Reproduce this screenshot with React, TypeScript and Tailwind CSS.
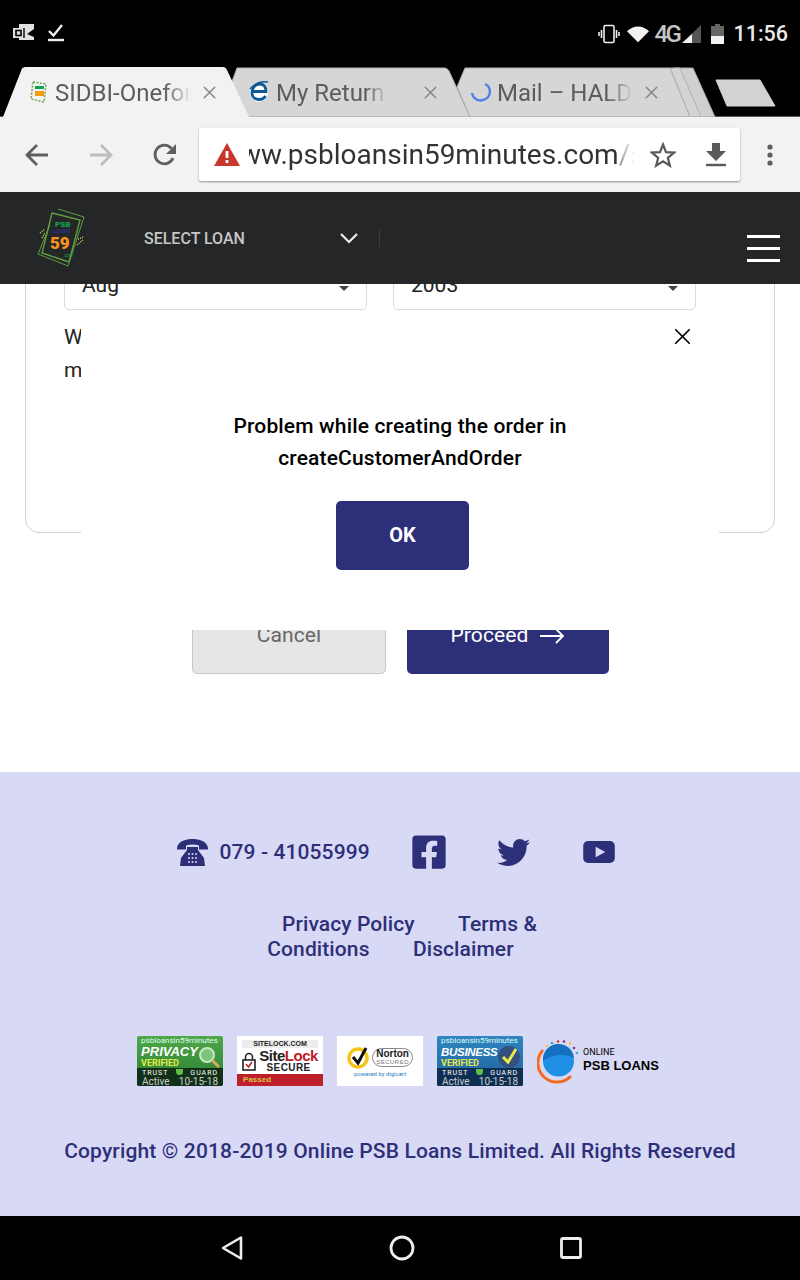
import { FaFacebookSquare, FaTwitter } from "react-icons/fa";
import { X } from "lucide-react";

const NAVY = "#2e2f79";

function StatusBar() {
  return (
    <div className="flex h-[67px] items-center bg-black pl-[13px] pr-[12px] text-[#e8e8e8]">
      <svg width="22" height="20" viewBox="0 0 22 20" className="mb-[2px]">
        <path d="M6 1h15v5l-7 5 7 3v3H6z" fill="#e0e0e0" />
        <path d="M0 5h11v10H0z" fill="#e0e0e0" />
        <path d="M11 5v10" stroke="#000" strokeWidth="1.4" />
        <rect x="3" y="7.5" width="5" height="5" fill="none" stroke="#000" strokeWidth="1.6" />
      </svg>
      <svg width="18" height="20" viewBox="0 0 18 20" className="ml-[12px] mb-[2px]">
        <path d="M2 8l4.500 4.500L15 2" fill="none" stroke="#eee" strokeWidth="2.400" />
        <path d="M1 17h16" stroke="#eee" strokeWidth="2.400" />
      </svg>
      <div className="ml-auto flex items-center">
        <svg width="22" height="20" viewBox="0 0 22 20">
          <rect x="6" y="1.500" width="10" height="17" rx="1.500" fill="none" stroke="#eee" strokeWidth="1.600" />
          <path d="M3.500 6v8M1 8v4M18.500 6v8M21 8v4" stroke="#eee" strokeWidth="1.600" />
        </svg>
        <svg width="22" height="18" viewBox="0 0 24 18" className="ml-[7px]">
          <path d="M0 6C7-1 17-1 24 6L12 18z" fill="#f2f2f2" />
        </svg>
        <span className="ml-[5px] w-[24px] text-[24px] font-medium leading-none tracking-[-2.500px] text-[#c4c4c4]">4G</span>
        <svg width="19" height="18" viewBox="0 0 19 18" className="ml-[4px]">
          <path d="M19 0v18H0z" fill="#555" />
          <path d="M10 9v9H0z" fill="#f2f2f2" />
        </svg>
        <svg width="13" height="20" viewBox="0 0 13 20" className="ml-[10px]">
          <path d="M4 0h5v2h4v18H0V2h4z" fill="#666" />
          <path d="M0 12h13v8H0z" fill="#f2f2f2" />
        </svg>
        <span className="ml-[9px] text-[21.5px] font-medium leading-none text-[#eaeaea]">11:56</span>
      </div>
    </div>
  );
}

function TabShapes() {
  return (
    <svg width="800" height="50" viewBox="0 0 800 50" className="absolute inset-0">
      <path d="M696 50L674 1h19l22 49z" fill="#d0d0d0" stroke="#a8a8a8" />
      <path d="M690 50L670 1h10l21 49z" fill="#d4d4d4" stroke="#b0b0b0" />
      <path d="M457 20l8-19h205l20 49H470z" fill="#d6d6d6" stroke="#b0b0b0" />
      <path d="M230 20l7-19h208a6 6 0 0 1 4 3l21 46H240z" fill="#d6d6d6" stroke="#b0b0b0" />
      <path d="M0 50h800" stroke="#b0b0b0" />
      <path d="M3 50L21 4a5 5 0 0 1 5-4h196a5 5 0 0 1 5 3l22 47z" fill="#f2f2f2" />
      <path d="M716 13h44l15 26h-48z" fill="#d2d2d2" stroke="#d2d2d2" strokeLinejoin="round" />
    </svg>
  );
}

function Tab({ width, icon, label, labelWidth }: { width: string; icon: React.ReactNode; label: string; labelWidth: string }) {
  return (
    <div className={`flex shrink-0 items-center ${width}`}>
      {icon}
      <span className={`ml-[5px] mt-[2px] overflow-hidden whitespace-nowrap text-[24px] text-[#5c5c5c] [mask-image:linear-gradient(to_right,black_80%,transparent)] ${labelWidth}`}>
        {label}
      </span>
    </div>
  );
}

function TabStrip() {
  return (
    <div className="relative h-[50px] bg-black">
      <TabShapes />
      <div className="relative flex h-full items-center pl-[29px]">
        <Tab
          width="w-[220px]"
          labelWidth="w-[136px]"
          label="SIDBI-Onefor"
          icon={
            <svg width="21" height="26" viewBox="0 0 21 26">
              <path d="M4 3l13 2-2 18-13-3z" fill="none" stroke="#6aa84f" strokeWidth="1.500" strokeDasharray="2 1.500" />
              <rect x="6" y="7" width="9" height="3" fill="#12a150" />
              <rect x="6" y="12" width="9" height="5" fill="#f59e0b" />
            </svg>
          }
        />
        <Tab
          width="w-[222px]"
          labelWidth="w-[112px]"
          label="My Return"
          icon={
            <svg width="22" height="24" viewBox="0 0 22 24">
              <ellipse cx="10" cy="12" rx="9" ry="10" fill="#fff" />
              <path d="M3 11.500h14C17 6 14 4 11 4 6 4 3 8 3 13c0 4 3 6.500 7 6.500 3 0 5-1 6.500-3.500" fill="none" stroke="#0b5a96" strokeWidth="2.800" />
              <path d="M1 9C6 3 13 1 19 2" fill="none" stroke="#0b5a96" strokeWidth="1.600" />
            </svg>
          }
        />
        <Tab
          width="w-[200px]"
          labelWidth="w-[136px]"
          label="Mail – HALD"
          icon={
            <svg width="20" height="22" viewBox="0 0 20 22" className="mr-[1px]">
              <path d="M14 3a8.500 8.500 0 0 1-2 16A8.500 8.500 0 0 1 1 12" fill="none" stroke="#4f83e8" strokeWidth="2.400" />
            </svg>
          }
        />
      </div>
      <X size={21} strokeWidth={1.800} className="absolute left-[199px] top-[15px] text-[#8a8a8a]" />
      <X size={21} strokeWidth={1.800} className="absolute left-[420px] top-[15px] text-[#8a8a8a]" />
      <X size={21} strokeWidth={1.800} className="absolute left-[641px] top-[15px] text-[#8a8a8a]" />
    </div>
  );
}

function Toolbar() {
  return (
    <div className="flex h-[75px] items-center bg-[#f2f2f2] pl-[25px]">
      <svg width="24" height="24" viewBox="0 0 24 24">
        <path d="M23 12H3M12 2L2 12l10 10" fill="none" stroke="#5f5f5f" strokeWidth="2.800" />
      </svg>
      <svg width="24" height="24" viewBox="0 0 24 24" className="ml-[40px]">
        <path d="M1 12h20M12 2l10 10-10 10" fill="none" stroke="#bdbdbd" strokeWidth="2.800" />
      </svg>
      <svg width="24" height="24" viewBox="0 0 24 24" className="ml-[40px]">
        <path d="M20 15a9.300 9.300 0 1 1-1.500-9.500" fill="none" stroke="#5f5f5f" strokeWidth="2.800" />
        <path d="M23 1v10H13z" fill="#5f5f5f" />
      </svg>
      <div className="ml-[22px] flex h-[53px] w-[541px] items-center rounded-[2px] bg-white pl-[15px] shadow-[0_1px_2px_rgba(0,0,0,0.4)]">
        <svg width="26" height="23" viewBox="0 0 26 23" className="shrink-0">
          <path d="M13 0l13 23H0z" fill="#c8372b" />
          <path d="M11.600 8h2.800v7h-2.800zM11.600 17h2.800v3h-2.800z" fill="#fff" />
        </svg>
        <div className="ml-[9px] w-[386px] shrink-0 overflow-hidden [mask-image:linear-gradient(to_right,black_96%,transparent)]">
          <div className="ml-[-30px] mt-[1px] whitespace-nowrap text-[28px] leading-[34px] text-[#333]">
            www.psbloansin59minutes.com<span className="text-[#9a9a9a]">/s</span>
          </div>
        </div>
        <svg width="26" height="26" viewBox="0 0 26 26" className="ml-[15px] shrink-0">
          <path d="M13 2.500l3 7.600 8.100.5-6.300 5.200 2.100 7.900L13 19.300l-6.900 4.400 2.100-7.900-6.300-5.200 8.100-.5z" fill="none" stroke="#5a5a5a" strokeWidth="2.200" />
        </svg>
        <svg width="22" height="24" viewBox="0 0 22 24" className="ml-[29px] shrink-0">
          <path d="M7 0h8v8h6L11 18 1 8h6z" fill="#5a5a5a" />
          <path d="M1 22h20" stroke="#5a5a5a" strokeWidth="2.400" />
        </svg>
      </div>
      <svg width="6" height="22" viewBox="0 0 6 22" className="ml-[27px]">
        <circle cx="3" cy="3" r="2.600" fill="#5f5f5f" />
        <circle cx="3" cy="11" r="2.600" fill="#5f5f5f" />
        <circle cx="3" cy="19" r="2.600" fill="#5f5f5f" />
      </svg>
    </div>
  );
}

function SiteHeader() {
  return (
    <div className="relative z-10 flex h-[92px] items-center bg-[#252628] pl-[37px]">
      <svg width="48" height="62" viewBox="0 0 48 62" className="shrink-0">
        <path d="M21 2l26 8-16 49L1 47 13 18" fill="none" stroke="#5f9e3c" strokeWidth="1" />
        <path d="M15 6l28 7-11 42L5 46z" fill="none" stroke="#5f9e3c" strokeWidth="1.400" />
        <text x="18" y="20" fontSize="8" fontWeight="900" fill="#12a150" fontFamily="Roboto">PSB</text>
        <text x="16" y="26" fontSize="5.500" fontWeight="700" fill="#2b2f80" fontFamily="Roboto">LOANS</text>
        <text x="13" y="42" fontSize="17" fontWeight="900" fill="#f7941d" fontFamily="Roboto">59</text>
        <text x="26" y="50" fontSize="4.500" fill="#12a150" fontFamily="Roboto">.com</text>
        <path d="M3 26l5-4M5 31l3-5M40 38l6-5M41 32l6-2" stroke="#c8d44a" strokeWidth="1.500" strokeDasharray="1 1.200" />
      </svg>
      <span className="ml-[59px] mt-[1px] text-[16px] font-medium text-[#c6c6c6]">SELECT LOAN</span>
      <svg width="20" height="13" viewBox="0 0 20 13" className="ml-[94px]">
        <path d="M2 2l8 8 8-8" fill="none" stroke="#eee" strokeWidth="2.200" />
      </svg>
      <div className="ml-[20px] h-[18px] w-px bg-[#3c3d3f]" />
      <div className="ml-auto mr-[20px] mt-[20px] flex flex-col gap-[9px]">
        <div className="h-[3px] w-[33px] bg-white" />
        <div className="h-[3px] w-[33px] bg-white" />
        <div className="h-[3px] w-[33px] bg-white" />
      </div>
    </div>
  );
}

function SelectBox({ label }: { label: string }) {
  return (
    <div className="relative flex h-[56px] w-[303px] items-center rounded-[5px] border border-[#d5dbe3] pl-[17px] pt-[8px] text-[21px] text-[#222]">
      {label}
      <div className="absolute right-[17px] top-[31px] h-0 w-0 border-x-[5px] border-t-[5px] border-x-transparent border-t-[#444]" />
    </div>
  );
}

function ErrorDialog() {
  return (
    <div className="absolute left-[81px] top-[34px] flex h-[312px] w-[638px] flex-col items-center bg-white pt-[92px]">
      <p className="text-center text-[21px] font-medium leading-[32px] tracking-[0.15px] text-black">
        Problem while creating the order in
        <br />
        createCustomerAndOrder
      </p>
      <button className="ml-[5px] mt-[27px] h-[69px] w-[133px] rounded-[5px] bg-[#2e2f79] pb-[2px] text-[20px] font-bold text-white">OK</button>
    </div>
  );
}

function Content() {
  return (
    <div className="relative h-[488px] overflow-hidden bg-white">
      <div className="mx-[25px] mt-[-31px] h-[280px] rounded-[14px] border border-[#cfd3d8] pl-[38px] pr-[78px]">
        <div className="flex gap-[26px]">
          <SelectBox label="Aug" />
          <SelectBox label="2003" />
        </div>
        <p className="mt-[11px] text-[21px] leading-[33px] text-[#222]">W</p>
        <p className="text-[21px] leading-[33px] text-[#222]">m</p>
      </div>
      <div className="mt-[63px] flex justify-center gap-[21px] pl-[1px]">
        <button className="h-[78px] w-[194px] rounded-[5px] border border-[#c8c8c8] bg-[#e6e6e6] pt-[2px] text-[21px] tracking-[0.1px] text-[#666]">Cancel</button>
        <button className="flex h-[78px] w-[202px] items-center justify-center gap-[12px] rounded-[5px] bg-[#2e2f79] pt-[2px] text-[21px] tracking-[0.1px] text-white">
          Proceed
          <svg width="25" height="16" viewBox="0 0 25 16">
            <path d="M0 8h23M16 1l7 7-7 7" fill="none" stroke="#fff" strokeWidth="1.800" />
          </svg>
        </button>
      </div>
      <ErrorDialog />
      <X size={27} strokeWidth={1.500} className="absolute left-[669px] top-[39px] text-black" />
    </div>
  );
}

function TrustBadge({ from, to, bottom, title, titleClass, glyph }: { from: string; to: string; bottom: string; title: string; titleClass: string; glyph: React.ReactNode }) {
  return (
    <div className="relative flex h-[50px] w-[86px] flex-col overflow-hidden rounded-[2px] text-white" style={{ background: `linear-gradient(to bottom, ${from}, ${to})` }}>
      <div className="h-[32px] pl-[4px] leading-none">
        <div className="mt-[1px] whitespace-nowrap text-[8px] text-[#dfe]">psbloansin59minutes</div>
        <div className={`mt-[1px] font-['Liberation_Sans',sans-serif] font-bold italic leading-[12px] ${titleClass}`}>{title}</div>
        <div className="text-[9px] font-bold leading-[10px] text-[#e6e84a]">VERIFIED</div>
      </div>
      <div className="absolute right-[2px] top-[9px]">{glyph}</div>
      <div className="flex-1 px-[5px] text-[7px] leading-[8px]" style={{ background: bottom }}>
        <div className="mt-[1px] flex justify-between tracking-[1px]">
          <span>TRUST</span>
          <span className="h-[6px] w-[7px] rounded-b-[4px] bg-[#5ec04a]" />
          <span>GUARD</span>
        </div>
        <div className="flex justify-between text-[10px] leading-[10px] text-[#ccc]">
          <span>Active</span>
          <span>10-15-18</span>
        </div>
      </div>
    </div>
  );
}

function SiteLockBadge() {
  return (
    <div className="flex h-[50px] w-[86px] flex-col items-center bg-white">
      <div className="mx-[5px] mt-[4px] w-[76px] bg-[#ececec] text-center font-['Liberation_Sans',sans-serif] text-[7px] font-bold leading-[8px] text-[#222]">SITELOCK.COM</div>
      <div className="flex flex-1 items-center">
        <svg width="14" height="19" viewBox="0 0 14 19">
          <path d="M3.500 8V5a3.500 3.500 0 0 1 7 0v3" fill="none" stroke="#222" strokeWidth="1.600" />
          <rect x="1" y="8" width="12" height="10" fill="none" stroke="#222" strokeWidth="1.600" />
          <path d="M4 12l2.500 3L10 10" fill="none" stroke="#c0202a" strokeWidth="1.600" />
        </svg>
        <div className="ml-[3px] text-center font-['Liberation_Sans',sans-serif] font-bold leading-none">
          <div className="text-[15px] leading-[13px] tracking-[-0.5px] text-[#222]">Site<span className="text-[#c0202a]">Lock</span></div>
          <div className="text-[10px] leading-[11px] tracking-[0.4px] text-[#222]">SECURE</div>
        </div>
      </div>
      <div className="h-[12px] w-full bg-[#bf1f2a] pl-[6px] font-['Liberation_Sans',sans-serif] text-[8px] font-bold leading-[12px] text-[#d8c24a]">Passed</div>
    </div>
  );
}

function NortonBadge() {
  return (
    <div className="flex h-[50px] w-[86px] flex-col items-center bg-white">
      <div className="mt-[9px] flex items-center">
        <svg width="24" height="24" viewBox="0 0 24 24">
          <circle cx="11" cy="13" r="9" fill="none" stroke="#f5c518" strokeWidth="3.500" />
          <path d="M6 12l5 6 8-15" fill="none" stroke="#111" strokeWidth="3" />
        </svg>
        <div className="ml-[1px] rounded-full border border-[#888] px-[3px] text-center font-['Liberation_Sans',sans-serif] leading-none">
          <div className="text-[10px] font-bold leading-[10px] text-[#222]">Norton</div>
          <div className="text-[6px] leading-[7px] tracking-[0.5px] text-[#777]">SECURED</div>
        </div>
      </div>
      <div className="mt-[1px] text-[6px] leading-[8px] text-[#2f7fc1]">powered by digicert</div>
    </div>
  );
}

function PsbLogo() {
  return (
    <div className="flex items-center">
      <svg width="44" height="46" viewBox="0 0 44 46">
        <circle cx="21.500" cy="23" r="15.500" fill="#1f8fe6" />
        <path d="M6 23a15.500 15.500 0 0 1 31-3c-8-5-23-4-31 3z" fill="#1470c0" />
        <path d="M6 12A18 18 0 0 0 34 38" fill="none" stroke="#f26b21" strokeWidth="3" />
        <circle cx="10" cy="8" r="1.300" fill="#f2c230" />
        <circle cx="15" cy="5" r="1.300" fill="#31a8e0" />
        <circle cx="21" cy="3.500" r="1.300" fill="#c0392b" />
        <circle cx="27" cy="3.500" r="1.300" fill="#8e2a8e" />
        <circle cx="33" cy="5.500" r="1.300" fill="#f2c230" />
        <circle cx="37" cy="10" r="1.300" fill="#7b3fa0" />
        <circle cx="40" cy="15" r="1.300" fill="#31a8e0" />
      </svg>
      <div className="ml-[2px] mt-[-2px]">
        <div className="text-[9px] leading-[10px] text-black">ONLINE</div>
        <div className="font-['Liberation_Sans',sans-serif] text-[13px] font-bold leading-[17px] text-black">PSB LOANS</div>
      </div>
    </div>
  );
}

function Footer() {
  return (
    <div className="flex h-[444px] flex-col items-center bg-[#d8d9f5] pt-[64px]" style={{ color: NAVY }}>
      <div className="flex h-[32px] items-center pr-[10px]">
        <svg width="33" height="27" viewBox="0 0 33 27">
          <path d="M1 9C2 2 10 0 16.500 0S31 2 32 9v1.500H23V6.500c-4-1.500-9-1.500-13 0v4H1z" fill={NAVY} />
          <path d="M11 8h11v3l6 8 1 8H4l1-8 6-8z" fill={NAVY} />
          <g fill="#d8d9f5">
            <circle cx="13" cy="15" r="1" /><circle cx="16.500" cy="15" r="1" /><circle cx="20" cy="15" r="1" />
            <circle cx="13" cy="19" r="1" /><circle cx="16.500" cy="19" r="1" /><circle cx="20" cy="19" r="1" />
            <circle cx="13" cy="23" r="1" /><circle cx="16.500" cy="23" r="1" /><circle cx="20" cy="23" r="1" />
          </g>
        </svg>
        <span className="ml-[11px] w-[149px] whitespace-nowrap text-[21px] font-medium leading-none tracking-[0.1px]">079 - 41055999</span>
        <FaFacebookSquare size={38} className="ml-[41px]" />
        <FaTwitter size={33} className="ml-[49px]" />
        <svg width="32" height="22" viewBox="0 0 33 23" className="ml-[53px]">
          <rect width="33" height="23" rx="5" fill={NAVY} />
          <path d="M13 6l10 5.500L13 17z" fill="#d8d9f5" />
        </svg>
      </div>
      <p className="mt-[44px] w-[340px] text-center text-[21px] font-medium leading-[25px] tracking-[0.1px]">
        <span className="px-[19px]">Privacy Policy</span> <span className="px-[19px]">Terms &amp; Conditions</span> <span className="px-[19px]">Disclaimer</span>
      </p>
      <div className="mt-[74px] flex h-[50px] items-center gap-[14px] pr-[4px]">
        <TrustBadge
          from="#4fa84a"
          to="#2a7d2e"
          bottom="#123018"
          title="PRIVACY"
          titleClass="text-[13px]"
          glyph={
            <svg width="24" height="24" viewBox="0 0 24 24">
              <circle cx="10" cy="10" r="7" fill="#7cc47c" stroke="#c8e6c8" strokeWidth="2" />
              <path d="M15 15l7 7" stroke="#d8a860" strokeWidth="3" />
            </svg>
          }
        />
        <SiteLockBadge />
        <NortonBadge />
        <TrustBadge
          from="#2f86c4"
          to="#1f5f96"
          bottom="#0f2f52"
          title="BUSINESS"
          titleClass="text-[11.5px] tracking-[-0.3px]"
          glyph={
            <svg width="24" height="24" viewBox="0 0 24 24">
              <circle cx="12" cy="12" r="11" fill="#33507f" />
              <path d="M6 12l5 5 8-13" fill="none" stroke="#e8e84a" strokeWidth="3" />
            </svg>
          }
        />
        <PsbLogo />
      </div>
      <p className="mt-[52px] whitespace-nowrap text-[21px] font-medium leading-[26px] tracking-[0.15px]">Copyright © 2018-2019 Online PSB Loans Limited. All Rights Reserved</p>
    </div>
  );
}

function NavBar() {
  return (
    <div className="flex h-[64px] items-center justify-center gap-[145px] bg-black pl-[1px]">
      <svg width="24" height="26" viewBox="0 0 24 26">
        <path d="M21 2.500v21L3 13z" fill="none" stroke="#eee" strokeWidth="2.600" strokeLinejoin="round" />
      </svg>
      <svg width="26" height="26" viewBox="0 0 26 26">
        <circle cx="13" cy="13" r="11" fill="none" stroke="#eee" strokeWidth="2.800" />
      </svg>
      <svg width="22" height="22" viewBox="0 0 22 22">
        <rect x="1.500" y="1.500" width="19" height="19" rx="1.500" fill="none" stroke="#eee" strokeWidth="2.800" />
      </svg>
    </div>
  );
}

export default function App() {
  return (
    <div className="h-[1280px] w-[800px] overflow-hidden font-['Roboto',sans-serif]">
      <StatusBar />
      <TabStrip />
      <Toolbar />
      <SiteHeader />
      <Content />
      <Footer />
      <NavBar />
    </div>
  );
}
